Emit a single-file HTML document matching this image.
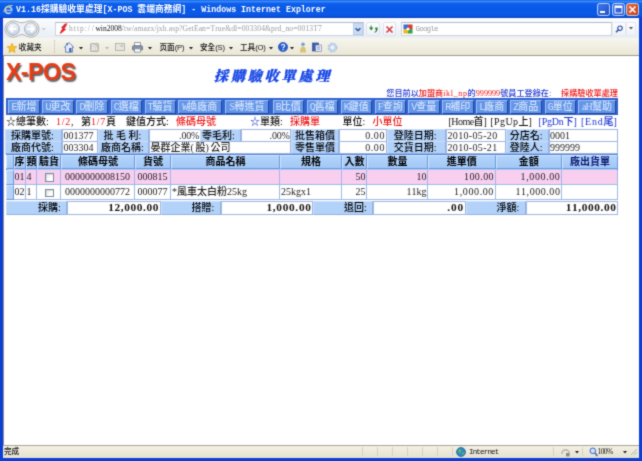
<!DOCTYPE html>
<html lang="zh-Hant"><head><meta charset="utf-8"><title>V1.16採購驗收單處理[X-POS 雲端商務網]</title>
<style>
html,body{margin:0;padding:0}
html{background:#0b3fd7}
body{width:642px;height:461px;overflow:hidden;position:relative;background:#fff;filter:url(#soft);
 font-family:"Liberation Serif","Noto Sans CJK TC",serif;font-size:10px;font-weight:500;color:#111;font-kerning:none;}
div,span,svg{position:absolute;box-sizing:border-box;white-space:pre}

.i{position:static}
.m{font-family:"Liberation Mono","Noto Sans CJK TC",monospace;letter-spacing:-0.1em}
.t{line-height:12px;height:12px}
.lab{background:#b3d2f9;border:1px solid #c9def9;border-right-color:#8fb2e6;border-bottom-color:#8fb2e6;height:13px;line-height:11px;text-align:center;color:#000}
.inp{background:#fff;border:1px solid #9fb6de;height:13px;line-height:11px;padding-left:.5px;color:#262626}
.r{text-align:right;padding-right:.4px;padding-left:0}
.btn{top:100px;height:14px;line-height:12px;background:#6395e8;border:1px solid #9fc2f4;border-right-color:#23469c;border-bottom-color:#23469c;color:#d2e3fb;text-align:center}
.th{top:154.6px;height:14.8px;line-height:12.6px;background:linear-gradient(#b2d4fb,#a3c8f6);border-left:1px solid #d6e6fb;border-top:1px solid #d6e6fb;border-right:1px solid #6c98dc;border-bottom:1px solid #6c98dc;text-align:center;font-weight:bold;color:#000}
.td{height:16px;line-height:14.6px;border-right:1px solid #9db8e6;border-bottom:1px solid #9db8e6;color:#222;padding-left:1px}
.p{background:#f9cff0}
.w{background:#fff}
.tot{font-size:11.3px;font-weight:bold;color:#111}
.red{color:#ee1616}
.blu{color:#1c34d0}
.tb{font-family:"Liberation Sans","Noto Sans CJK SC",sans-serif;font-size:7.6px;color:#111;line-height:10px;height:10px}
</style></head>
<body>
<svg width="0" height="0" style="left:0;top:0"><filter id="soft" x="0" y="0" width="100%" height="100%" color-interpolation-filters="sRGB"><feConvolveMatrix order="3" kernelMatrix="1 3 1 3 16 3 1 3 1" divisor="32" edgeMode="duplicate" preserveAlpha="true"/></filter></svg>
<div style="left:0px;top:0px;width:642px;height:461px;background:#0b3fd7"></div>
<div style="left:0px;top:0px;width:642px;height:18px;background:linear-gradient(#1766e6 0,#3888fa 1.5px,#0e5fec 3.5px,#0a57e5 9px,#0b5ae8 14px,#0a50dc 16.5px,#0a3db8 18px)"></div>
<svg style="left:3px;top:3.5px" width="11" height="11" viewBox="0 0 11 11"><circle cx="5.4" cy="6" r="3.3" fill="#1a56c8" stroke="#a9d0f8" stroke-width="1.7"/><path d="M2.6 6.2H8.4" stroke="#a9d0f8" stroke-width="1.2"/><path d="M8.6 6.4L8.8 8.4L6.6 8.6z" fill="#0a57e5"/><path d="M0.8 8.2C1.200 4 5 1 9.800 1.600" fill="none" stroke="#e6d25a" stroke-width="1"/></svg>
<div style="left:16px;top:3.5px;height:12px;line-height:12px;color:#fff;font-weight:bold;font-size:8.8px;font-family:'Liberation Mono','Noto Sans CJK TC',monospace"><span class="i" style="font-size:8.3px">V1.16</span>採購驗收單處理<span class="i" style="font-size:8.3px">[X-POS </span>雲端商務網<span class="i" style="font-size:8.3px">] - Windows Internet Explorer</span></div>
<svg style="left:597px;top:3.3px" width="13" height="13" viewBox="0 0 13 13"><defs><linearGradient id="g597" x1="0" y1="0" x2="1" y2="1"><stop offset="0" stop-color="#4078ee"/><stop offset="1" stop-color="#1f4fc6"/></linearGradient></defs><rect x="0.5" y="0.5" width="12" height="12" rx="2" fill="url(#g597)" stroke="#cfe0fb" stroke-width="0.9"/><rect x="3" y="8" width="5" height="2" fill="#fff"/></svg>
<svg style="left:611.5px;top:3.3px" width="13" height="13" viewBox="0 0 13 13"><defs><linearGradient id="g611" x1="0" y1="0" x2="1" y2="1"><stop offset="0" stop-color="#4078ee"/><stop offset="1" stop-color="#1f4fc6"/></linearGradient></defs><rect x="0.5" y="0.5" width="12" height="12" rx="2" fill="url(#g611)" stroke="#cfe0fb" stroke-width="0.9"/><rect x="3" y="3" width="7" height="7" fill="none" stroke="#fff" stroke-width="1"/><rect x="3" y="3" width="7" height="2" fill="#fff"/></svg>
<svg style="left:626px;top:3.3px" width="13" height="13" viewBox="0 0 13 13"><defs><linearGradient id="g626" x1="0" y1="0" x2="1" y2="1"><stop offset="0" stop-color="#ea6a3e"/><stop offset="1" stop-color="#c33d18"/></linearGradient></defs><rect x="0.5" y="0.5" width="12" height="12" rx="2" fill="url(#g626)" stroke="#cfe0fb" stroke-width="0.9"/><path d="M3.5 3.5L9.5 9.5M9.5 3.5L3.5 9.5" stroke="#fff" stroke-width="1.6"/></svg>
<div style="left:3px;top:18px;width:636px;height:19.5px;background:linear-gradient(#fafcfe,#e9eef6)"></div>
<div style="left:3px;top:37.5px;width:636px;height:17.5px;background:linear-gradient(#f7f6ee,#eae7d6)"></div>
<div style="left:3px;top:55px;width:636px;height:1px;background:#9c9a8c"></div>
<div style="left:3px;top:56px;width:636px;height:388.5px;background:#fff;border-left:1px solid #8f8f8f"></div>
<div style="left:3px;top:444.5px;width:636px;height:1px;background:#a8a595"></div>
<div style="left:3px;top:445.5px;width:636px;height:12px;background:linear-gradient(#f3f0e4,#e6e2d0)"></div>
<svg style="left:4px;top:19.7px" width="46" height="18" viewBox="0 0 46 18"><defs><linearGradient id="nb" x1="0" y1="0" x2="0" y2="1"><stop offset="0" stop-color="#f3f6fb"/><stop offset="1" stop-color="#c6d3e3"/></linearGradient></defs><path d="M9 0.800a8.200 8.200 0 1 0 0 16.400c3.500 0 5.500-2.600 8.900-2.600s5.400 2.600 8.900 2.600a8.200 8.200 0 1 0 0-16.400c-3.500 0-5.500 2-8.900 2s-5.400-2-8.900-2z" fill="#eff2f7" stroke="#b3b0a4" stroke-width="1"/><circle cx="9" cy="9" r="6.300" fill="url(#nb)" stroke="#98a6b8" stroke-width="0.9"/><circle cx="26.800" cy="9" r="6.300" fill="url(#nb)" stroke="#98a6b8" stroke-width="0.9"/><path d="M12.500 9H6.500M9 6L6 9L9 12" fill="none" stroke="#fff" stroke-width="2"/><path d="M23.300 9H29.300M26.800 6L29.800 9L26.800 12" fill="none" stroke="#fff" stroke-width="2"/><path d="M37.500 8.300h4.400l-2.200 2.200z" fill="#c2c8d0"/></svg>
<div style="left:55px;top:22px;width:309px;height:13.5px;background:#fff;border:1px solid #cdd3dc;border-top-color:#b4bbc6"></div>
<div style="left:352.8px;top:22.5px;width:10.7px;height:12.5px;background:#c9dcf6;border:1px solid #b9cfef"></div>
<svg style="left:354.2px;top:25.5px" width="8" height="7" viewBox="0 0 8 7"><path d="M1.6 2.2L4 4.6L6.4 2.2" fill="none" stroke="#283f86" stroke-width="1.3"/></svg>
<svg style="left:59px;top:23px" width="9" height="11" viewBox="0 0 9 11"><path d="M6 0.5L8.5 0.5L5.5 6L7.5 6L2 10.5L0.5 10.5L3.5 5L1.8 5z" fill="#e2262c"/></svg>
<div style="left:69px;top:23px;height:11px;line-height:11px;font-size:7.55px;color:#9c9c9c"><span class="i" style="letter-spacing:0.133em">http:</span><span class="i" style="letter-spacing:0.222em">//</span><span class="i" style="color:#111">win2008</span><span class="i" style="letter-spacing:0.017em">/tw/amazx/jxh.asp?GetEan=True&amp;dl=003304&amp;prd_no=0013T7</span></div>
<div style="left:366px;top:22px;width:14px;height:13.5px;background:linear-gradient(#fdfefe,#eef2f8);border:1px solid #dde3ec;border-radius:2px"></div>
<svg style="left:367.5px;top:23.5px" width="11" height="11" viewBox="0 0 11 11"><path d="M3.6 1.4v2.2H5.4L3.2 6.4 1 3.6H2.6V1.4z" fill="#2a7d30"/><path d="M7.2 3.6h2.4c.4 2.6-.6 4.4-2.8 5.2l-.4-.9c1.2-.6 1.7-1.500 1.6-2.500H7.200z" fill="#2a7d30"/></svg>
<div style="left:382.5px;top:22px;width:13.5px;height:13.5px;background:linear-gradient(#fdfefe,#eef2f8);border:1px solid #dde3ec;border-radius:2px"></div>
<svg style="left:385px;top:24.5px" width="9" height="9" viewBox="0 0 9 9"><path d="M1.5 1.5L7.5 7.5M7.5 1.5L1.5 7.5" stroke="#d8323a" stroke-width="1.5"/></svg>
<div style="left:401px;top:22px;width:211px;height:13.5px;background:#fff;border:1px solid #cdd3dc;border-top-color:#b4bbc6"></div>
<svg style="left:403px;top:23.5px" width="10" height="10" viewBox="0 0 10 10"><rect x="0" y="0" width="10" height="10" rx="1.5" fill="#f4f4f4"/><rect x="0.5" y="0.5" width="4.5" height="4.5" fill="#3a6be0"/><rect x="5" y="0.5" width="4.5" height="4.5" fill="#e03a2a"/><rect x="0.5" y="5" width="4.5" height="4.5" fill="#e8b820"/><rect x="5" y="5" width="4.5" height="4.5" fill="#3aa048"/><circle cx="5" cy="5" r="1.6" fill="#fff"/></svg>
<div style="left:415.5px;top:23.5px;height:11px;line-height:11px;font-size:7.5px;color:#a0a0a0;font-family:'Liberation Mono',monospace;letter-spacing:-0.8px">Google</div>
<div style="left:612px;top:22px;width:13.5px;height:13.5px;background:linear-gradient(#fbfcfe,#eef2f8);border:1px solid #e6eaf1"></div>
<svg style="left:614px;top:24px" width="10" height="10" viewBox="0 0 10 10"><circle cx="6" cy="4.2" r="2.2" fill="#fff" stroke="#2b4fa5" stroke-width="1.2"/><path d="M4.300 6L2 8.300" stroke="#2b4fa5" stroke-width="1.5"/></svg>
<div style="left:625.5px;top:22px;width:10.5px;height:13.5px;background:linear-gradient(#fbfcfe,#eef2f8);border:1px solid #e6eaf1"></div>
<svg style="left:629px;top:27.3px" width="4" height="3" viewBox="0 0 4 3"><path d="M0 0h4L2 2.6z" fill="#555"/></svg>
<svg style="left:6.6px;top:42.8px" width="10" height="10" viewBox="0 0 10 10"><path d="M5 0.3L6.4 3.4 9.8 3.8 7.3 6.1 8 9.5 5 7.8 2 9.5 2.7 6.1 0.2 3.8 3.6 3.4z" fill="#f6c228" stroke="#d99a10" stroke-width="0.6"/></svg>
<div class="tb" style="left:18.8px;top:42.6px">收藏夹</div>
<div style="left:54px;top:40px;width:1px;height:13px;background:repeating-linear-gradient(#b9b7a8 0,#b9b7a8 1px,transparent 1px,transparent 2px)"></div>
<svg style="left:64px;top:41.5px" width="10" height="11" viewBox="0 0 10 11"><path d="M5 0.5L9.6 5H8.4V10.2H1.6V5H0.4z" fill="#e9eef8" stroke="#4a68a8" stroke-width="0.8"/><rect x="5.2" y="6" width="2.2" height="4" fill="#3a5fb0"/><rect x="2.4" y="1" width="1.4" height="2.4" fill="#3a5fb0"/></svg>
<svg style="left:79px;top:46.5px" width="4" height="3" viewBox="0 0 4 3"><path d="M0 0h4L2 2.6z" fill="#222"/></svg>
<svg style="left:90px;top:42.5px" width="9" height="9" viewBox="0 0 9 9"><rect x="0.4" y="0.4" width="8.2" height="8.2" rx="1.5" fill="#c9c9c4" stroke="#a9a9a2" stroke-width="0.8"/><circle cx="2.6" cy="6.4" r="0.9" fill="#fff"/><path d="M1.8 4a3.2 3.2 0 0 1 3.2 3.2M1.8 2a5.2 5.2 0 0 1 5.2 5.2" fill="none" stroke="#fff" stroke-width="0.9"/></svg>
<svg style="left:104.5px;top:46.5px" width="4" height="3" viewBox="0 0 4 3"><path d="M0 0h4L2 2.6z" fill="#b5b5ad"/></svg>
<svg style="left:115px;top:43px" width="10" height="8" viewBox="0 0 10 8"><rect x="0.5" y="0.5" width="9" height="7" fill="#e6e6e0" stroke="#b2b2aa" stroke-width="0.9"/><rect x="5.5" y="1.8" width="2.6" height="2.2" fill="#c4c4bc"/></svg>
<svg style="left:132px;top:41.5px" width="11" height="11" viewBox="0 0 11 11"><rect x="2.6" y="0.6" width="5.8" height="3.6" fill="#fff" stroke="#7d8694" stroke-width="0.8"/><rect x="0.5" y="3.8" width="10" height="4.4" rx="1" fill="#8a95a8" stroke="#5f6878" stroke-width="0.8"/><rect x="2.4" y="6.8" width="6.2" height="3.4" fill="#f2f4f8" stroke="#7d8694" stroke-width="0.7"/></svg>
<svg style="left:148px;top:46.5px" width="4" height="3" viewBox="0 0 4 3"><path d="M0 0h4L2 2.6z" fill="#222"/></svg>
<div class="tb" style="left:159.5px;top:42.6px">页面<span class="i" style="letter-spacing:-0.2px">(P)</span></div>
<svg style="left:188.5px;top:46.5px" width="4" height="3" viewBox="0 0 4 3"><path d="M0 0h4L2 2.6z" fill="#222"/></svg>
<div class="tb" style="left:200px;top:42.6px">安全<span class="i" style="letter-spacing:-0.2px">(S)</span></div>
<svg style="left:228.5px;top:46.5px" width="4" height="3" viewBox="0 0 4 3"><path d="M0 0h4L2 2.6z" fill="#222"/></svg>
<div class="tb" style="left:240px;top:42.6px">工具<span class="i" style="letter-spacing:-0.2px">(O)</span></div>
<svg style="left:268.5px;top:46.5px" width="4" height="3" viewBox="0 0 4 3"><path d="M0 0h4L2 2.6z" fill="#222"/></svg>
<svg style="left:277.5px;top:42px" width="10" height="10" viewBox="0 0 10 10"><circle cx="5" cy="5" r="4.6" fill="#2a5fd0" stroke="#1b3f9a" stroke-width="0.6"/><path d="M3.6 3.8c0-2 3-2 3 0 0 1.2-1.5 1.2-1.5 2.4" fill="none" stroke="#fff" stroke-width="1.1"/><circle cx="5.1" cy="7.7" r="0.7" fill="#fff"/></svg>
<svg style="left:289.5px;top:46.5px" width="4" height="3" viewBox="0 0 4 3"><path d="M0 0h4L2 2.6z" fill="#222"/></svg>
<svg style="left:298.5px;top:41.5px" width="8" height="11" viewBox="0 0 8 11"><circle cx="4" cy="2.2" r="1.8" fill="#6fa0d8"/><path d="M1 10.5c0-5 1.5-6 3-6s3 1 3 6z" fill="#d9c37a"/></svg>
<svg style="left:311.5px;top:42px" width="10" height="10" viewBox="0 0 10 10"><rect x="0.5" y="1" width="6" height="8" fill="#3a5fb8" stroke="#24407e" stroke-width="0.6"/><rect x="3.5" y="3" width="6" height="6.5" fill="#e9eef8" stroke="#6a7ca8" stroke-width="0.6"/><rect x="4.8" y="4.6" width="3.2" height="1" fill="#8a9ac0"/><rect x="4.8" y="6.6" width="3.2" height="1" fill="#8a9ac0"/></svg>
<svg style="left:327px;top:41.5px" width="11" height="11" viewBox="0 0 11 11"><circle cx="5.5" cy="5.5" r="3.6" fill="none" stroke="#a9c3e6" stroke-width="2.6" stroke-dasharray="2 0.9"/><circle cx="5.5" cy="5.5" r="3.2" fill="none" stroke="#bcd2ee" stroke-width="1.6"/><circle cx="5.5" cy="5.5" r="1.5" fill="#f2f6fb"/></svg>
<div class="tb" style="left:4px;top:447.2px">完成</div>
<div style="left:362px;top:447px;width:1px;height:9px;background:#d6d2c0"></div>
<div style="left:377px;top:447px;width:1px;height:9px;background:#d6d2c0"></div>
<div style="left:392px;top:447px;width:1px;height:9px;background:#d6d2c0"></div>
<div style="left:407px;top:447px;width:1px;height:9px;background:#d6d2c0"></div>
<div style="left:422px;top:447px;width:1px;height:9px;background:#d6d2c0"></div>
<div style="left:437px;top:447px;width:1px;height:9px;background:#d6d2c0"></div>
<div style="left:452px;top:447px;width:1px;height:9px;background:#d6d2c0"></div>
<div style="left:553px;top:447px;width:1px;height:9px;background:#d6d2c0"></div>
<div style="left:582px;top:447px;width:1px;height:9px;background:#d6d2c0"></div>
<svg style="left:456px;top:446.5px" width="10" height="10" viewBox="0 0 10 10"><circle cx="5" cy="5" r="4.5" fill="#2f86c8" stroke="#1d5c92" stroke-width="0.7"/><path d="M2 3.2c1.2-1.6 3-1.2 3.4 0 .4 1.2-1 1.6-.6 3-.9.4-2.4-.6-2.8-3z" fill="#58b868"/><path d="M6.4 5.4c1-.4 2 .2 1.8 1.4-.4 1-1.4 1.4-2 1.2z" fill="#58b868"/></svg>
<div style="left:469px;top:447px;height:10px;line-height:10px;font-size:7.5px;color:#111;font-family:'Liberation Mono',monospace;letter-spacing:-0.82px">Internet</div>
<svg style="left:561px;top:446.5px" width="10" height="10" viewBox="0 0 10 10"><path d="M1 7a3.6 3.6 0 0 1 7.2-1" fill="none" stroke="#b9b9b0" stroke-width="1.6"/><rect x="5" y="6" width="3.6" height="3.4" fill="#8a8a84"/></svg>
<svg style="left:574.5px;top:450.5px" width="4" height="3" viewBox="0 0 4 3"><path d="M0 0h4L2 2.6z" fill="#222"/></svg>
<svg style="left:588.5px;top:446.5px" width="9" height="10" viewBox="0 0 9 10"><circle cx="3.8" cy="3.8" r="2.8" fill="#cfe2f8" stroke="#3a66c0" stroke-width="1"/><path d="M6 6L8.4 9" stroke="#3a66c0" stroke-width="1.5"/></svg>
<div style="left:597.5px;top:447px;height:10px;line-height:10px;font-size:7.5px;color:#111;"><span class="i" style="letter-spacing:-0.083em">100%</span></div>
<svg style="left:622.5px;top:450.5px" width="4" height="3" viewBox="0 0 4 3"><path d="M0 0h4L2 2.6z" fill="#222"/></svg>
<svg style="left:630px;top:448px" width="8" height="8" viewBox="0 0 8 8"><path d="M7 1L1 7M7 4L4 7" stroke="#b8b4a0" stroke-width="1"/></svg>
<div style="left:5.9px;top:58.3px;height:28px;line-height:28px;font-family:'Liberation Sans',sans-serif;font-weight:bold;font-size:23.2px;letter-spacing:-0.5px;color:#e93b14;text-shadow:1.3px 1.5px 1.4px #5c5c5c">X-POS</div>
<div style="left:214px;top:66px;height:22px;line-height:22px;font-family:'Liberation Serif','Noto Serif CJK SC',serif;font-weight:900;font-style:italic;font-size:14px;letter-spacing:2.9px;color:#1444e6;-webkit-text-stroke:.3px #1444e6">採購驗收單處理</div>
<div style="right:24px;top:87.7px;height:12px;line-height:12px;font-size:8.15px;font-weight:500" class="blu">您目前以<span class="i red">加盟商<span class="i" style="letter-spacing:0.074em">ikl_np</span></span>的<span class="i red">999999</span>號員工登錄在<span class="i" style="letter-spacing:0.241em">:  </span><span class="i red">採購驗收單處理</span></div>
<div style="left:6px;top:98.3px;width:612px;height:16.7px;background:#3163d0"></div>
<div class="btn" style="left:8px;width:32px"><span class="i m">E</span>新增</div>
<div class="btn" style="left:42px;width:32px"><span class="i m">U</span>更改</div>
<div class="btn" style="left:76px;width:32px"><span class="i m">D</span>刪除</div>
<div class="btn" style="left:110.5px;width:31.5px"><span class="i m">C</span>選檔</div>
<div class="btn" style="left:144.5px;width:31px"><span class="i m">T</span>驗貨</div>
<div class="btn" style="left:178px;width:43.5px"><span class="i m">W</span>換廠商</div>
<div class="btn" style="left:225px;width:44px"><span class="i" style="letter-spacing:-0.056em">S</span>轉進貨</div>
<div class="btn" style="left:272.5px;width:31.5px"><span class="i m">B</span>比價</div>
<div class="btn" style="left:306.5px;width:31.5px"><span class="i m">Q</span>舊檔</div>
<div class="btn" style="left:340.5px;width:31.5px"><span class="i m">K</span>鍵值</div>
<div class="btn" style="left:374.5px;width:31.5px"><span class="i" style="letter-spacing:-0.056em">F</span>查詢</div>
<div class="btn" style="left:408px;width:31.5px"><span class="i m">V</span>查量</div>
<div class="btn" style="left:442px;width:31.5px"><span class="i m">R</span>補印</div>
<div class="btn" style="left:476px;width:31.5px"><span class="i m">L</span>廠商</div>
<div class="btn" style="left:510px;width:31.5px"><span class="i m">Z</span>商品</div>
<div class="btn" style="left:544.5px;width:31.5px"><span class="i m">G</span>單位</div>
<div class="btn" style="left:578px;width:38px"><span class="i" style="letter-spacing:-0.083em">aH</span>幫助</div>
<div class="t" style="left:6px;top:116px;">☆總筆數<span class="i" style="letter-spacing:0.236em">: </span><span class="i red"><span class="i" style="letter-spacing:0.074em">1/2</span></span><span class="i" style="letter-spacing:0.250em">, </span>第<span class="i red"><span class="i" style="letter-spacing:0.074em">1/7</span></span>頁<span class="i" style="letter-spacing:0.250em">  </span>鍵值方式<span class="i" style="letter-spacing:0.236em">: </span><span class="i red">條碼母號</span></div>
<div class="t" style="left:250px;top:116px;"><span class="i blu">☆</span>單類<span class="i" style="letter-spacing:0.236em">: </span><span class="i red">採購單</span></div>
<div class="t" style="left:342.5px;top:116px;">單位<span class="i" style="letter-spacing:0.236em">: </span><span class="i red">小單位</span></div>
<div class="t" style="left:448.5px;top:116px;"><span class="i" style="letter-spacing:-0.055em">[Home</span>首<span class="i" style="letter-spacing:0.044em">] [PgUp</span>上<span class="i" style="letter-spacing:0.208em">] </span><span class="i blu"><span class="i" style="letter-spacing:-0.022em">[PgDn</span>下<span class="i" style="letter-spacing:0.079em">] [End</span>尾<span class="i" style="letter-spacing:0.167em">]</span></span></div>
<div style="left:5px;top:128.5px;width:613px;height:25.5px;background:#b3d2f9"></div>
<div class="lab" style="left:5px;top:128.7px;width:57px;">採購單號<span class="i" style="letter-spacing:0.222em">:</span></div>
<div class="inp" style="left:62px;top:128.7px;width:36px">001377</div>
<div class="lab" style="left:98px;top:128.7px;width:51px;word-spacing:0px">批 毛 利<span class="i" style="letter-spacing:0.222em">:</span></div>
<div class="inp r" style="left:149px;top:128.7px;width:51.5px"><span class="i" style="letter-spacing:-0.021em">.00%</span></div>
<div class="lab" style="left:200px;top:128.7px;width:41px;text-align:left;padding-left:1px">零毛利<span class="i" style="letter-spacing:0.222em">:</span></div>
<div class="inp r" style="left:241px;top:128.7px;width:50px"><span class="i" style="letter-spacing:-0.021em">.00%</span></div>
<div class="lab" style="left:291px;top:128.7px;width:48px;">批售箱價</div>
<div class="inp r" style="left:339px;top:128.7px;width:47.5px"><span class="i" style="letter-spacing:0.062em">0.00</span></div>
<div class="lab" style="left:386.5px;top:128.7px;width:59.5px;">登陸日期<span class="i" style="letter-spacing:0.222em">:</span></div>
<div class="inp" style="left:446px;top:128.7px;width:60px"><span class="i" style="letter-spacing:0.033em">2010-05-20</span></div>
<div class="lab" style="left:506px;top:128.7px;width:42.5px;">分店名<span class="i" style="letter-spacing:0.222em">:</span></div>
<div class="inp" style="left:548.5px;top:128.7px;width:69.5px">0001</div>
<div class="lab" style="left:5px;top:141.2px;width:57px;">廠商代號<span class="i" style="letter-spacing:0.222em">:</span></div>
<div class="inp" style="left:62px;top:141.2px;width:36px">003304</div>
<div class="lab" style="left:98px;top:141.2px;width:51px;">廠商名稱<span class="i" style="letter-spacing:0.222em">:</span></div>
<div class="inp" style="left:149px;top:141.2px;width:142px">晏群企業<span class="i" style="letter-spacing:0.167em">(</span>股<span class="i" style="letter-spacing:0.167em">)</span>公司</div>
<div class="lab" style="left:291px;top:141.2px;width:48px;">零售單價</div>
<div class="inp r" style="left:339px;top:141.2px;width:47.5px"><span class="i" style="letter-spacing:0.062em">0.00</span></div>
<div class="lab" style="left:386.5px;top:141.2px;width:59.5px;">交貨日期<span class="i" style="letter-spacing:0.222em">:</span></div>
<div class="inp" style="left:446px;top:141.2px;width:60px"><span class="i" style="letter-spacing:0.033em">2010-05-21</span></div>
<div class="lab" style="left:506px;top:141.2px;width:42.5px;">登陸人<span class="i" style="letter-spacing:0.222em">:</span></div>
<div class="inp" style="left:548.5px;top:141.2px;width:69.5px">999999</div>
<div style="left:6px;top:154.3px;width:612px;height:45.8px;background:#a8cbf6;border:1px solid #5585e0"></div>
<div class="th" style="left:6px;width:7.5px;"></div>
<div class="th" style="left:13.5px;width:12px;">序</div>
<div class="th" style="left:25.5px;width:11.5px;">類</div>
<div class="th" style="left:37px;width:24px;">驗貨</div>
<div class="th" style="left:61px;width:74px;">條碼母號</div>
<div class="th" style="left:135px;width:36px;">貨號</div>
<div class="th" style="left:171px;width:109px;">商品名稱</div>
<div class="th" style="left:280px;width:62px;">規格</div>
<div class="th" style="left:342px;width:25px;">入數</div>
<div class="th" style="left:367px;width:61px;">數量</div>
<div class="th" style="left:428px;width:67.5px;">進單價</div>
<div class="th" style="left:495.5px;width:66.5px;">金額</div>
<div class="th" style="left:562px;width:56px;color:#0c1670;">廠出貨單</div>
<div style="left:6px;top:169.5px;width:7.5px;height:15.2px;background:#b3d2f9;border:1px solid #d6e6fb;border-right-color:#6c98dc;border-bottom-color:#6c98dc"></div>
<div class="td p" style="left:13.5px;top:169.5px;width:12px;height:15.7px;">01</div>
<div class="td p" style="left:25.5px;top:169.5px;width:11.5px;height:15.7px;">4</div>
<div class="td p" style="left:37px;top:169.5px;width:24px;height:15.7px;"><span style="left:8.1px;top:3.6px;width:8.8px;height:8.6px;background:linear-gradient(135deg,#e4e8e2,#fff 70%);border:1px solid #7c8a9c;box-shadow:inset 0.6px 0.6px 0 #c8ccd2"></span></div>
<div class="td p" style="left:61px;top:169.5px;width:74px;height:15.7px;text-align:center;padding:0;">0000000008150</div>
<div class="td p" style="left:135px;top:169.5px;width:36px;height:15.7px;text-align:center;padding:0;">000815</div>
<div class="td p" style="left:171px;top:169.5px;width:109px;height:15.7px;"></div>
<div class="td p" style="left:280px;top:169.5px;width:62px;height:15.7px;"></div>
<div class="td p" style="left:342px;top:169.5px;width:25px;height:15.7px;text-align:right;padding-right:.5px;padding-left:0;">50</div>
<div class="td p" style="left:367px;top:169.5px;width:61px;height:15.7px;text-align:right;padding-right:.5px;padding-left:0;">10</div>
<div class="td p" style="left:428px;top:169.5px;width:67.5px;height:15.7px;text-align:right;padding-right:.5px;padding-left:0;"><span class="i" style="letter-spacing:0.042em">100.00</span></div>
<div class="td p" style="left:495.5px;top:169.5px;width:66.5px;height:15.7px;text-align:right;padding-right:.5px;padding-left:0;"><span class="i" style="letter-spacing:0.062em">1,000.00</span></div>
<div class="td p" style="left:562px;top:169.5px;width:56px;height:15.7px;"></div>
<div style="left:6px;top:185.2px;width:7.5px;height:15.2px;background:#b3d2f9;border:1px solid #d6e6fb;border-right-color:#6c98dc;border-bottom-color:#6c98dc"></div>
<div class="td w" style="left:13.5px;top:185.2px;width:12px;height:14.6px;">02</div>
<div class="td w" style="left:25.5px;top:185.2px;width:11.5px;height:14.6px;">1</div>
<div class="td w" style="left:37px;top:185.2px;width:24px;height:14.6px;"><span style="left:8.1px;top:3.6px;width:8.8px;height:8.6px;background:linear-gradient(135deg,#e4e8e2,#fff 70%);border:1px solid #7c8a9c;box-shadow:inset 0.6px 0.6px 0 #c8ccd2"></span></div>
<div class="td w" style="left:61px;top:185.2px;width:74px;height:14.6px;text-align:center;padding:0;">0000000000772</div>
<div class="td w" style="left:135px;top:185.2px;width:36px;height:14.6px;text-align:center;padding:0;">000077</div>
<div class="td w" style="left:171px;top:185.2px;width:109px;height:14.6px;">*風車太白粉25kg</div>
<div class="td w" style="left:280px;top:185.2px;width:62px;height:14.6px;">25kgx1</div>
<div class="td w" style="left:342px;top:185.2px;width:25px;height:14.6px;text-align:right;padding-right:.5px;padding-left:0;">25</div>
<div class="td w" style="left:367px;top:185.2px;width:61px;height:14.6px;text-align:right;padding-right:.5px;padding-left:0;">11kg</div>
<div class="td w" style="left:428px;top:185.2px;width:67.5px;height:14.6px;text-align:right;padding-right:.5px;padding-left:0;"><span class="i" style="letter-spacing:0.062em">1,000.00</span></div>
<div class="td w" style="left:495.5px;top:185.2px;width:66.5px;height:14.6px;text-align:right;padding-right:.5px;padding-left:0;"><span class="i" style="letter-spacing:0.056em">11,000.00</span></div>
<div class="td w" style="left:562px;top:185.2px;width:56px;height:14.6px;"></div>
<div style="left:6px;top:201px;width:612px;height:14px;background:#b3d2f9"></div>
<div class="lab" style="left:6px;top:201px;width:61px;height:14px;line-height:12px;text-align:right;padding-right:3px">採購<span class="i" style="letter-spacing:0.222em">:</span></div>
<div class="inp r tot" style="left:67px;top:201px;width:93.5px;height:14px;line-height:11.2px"><span class="i" style="letter-spacing:0.056em">12,000.00</span></div>
<div class="lab" style="left:160.5px;top:201px;width:60px;height:14px;line-height:12px;text-align:right;padding-right:3px">搭贈<span class="i" style="letter-spacing:0.222em">:</span></div>
<div class="inp r tot" style="left:220.5px;top:201px;width:92.5px;height:14px;line-height:11.2px"><span class="i" style="letter-spacing:0.062em">1,000.00</span></div>
<div class="lab" style="left:313px;top:201px;width:60px;height:14px;line-height:12px;text-align:right;padding-right:3px">退回<span class="i" style="letter-spacing:0.222em">:</span></div>
<div class="inp r tot" style="left:373px;top:201px;width:92.5px;height:14px;line-height:11.2px"><span class="i" style="letter-spacing:0.083em">.00</span></div>
<div class="lab" style="left:465.5px;top:201px;width:60px;height:14px;line-height:12px;text-align:right;padding-right:3px">淨額<span class="i" style="letter-spacing:0.222em">:</span></div>
<div class="inp r tot" style="left:525.5px;top:201px;width:92.5px;height:14px;line-height:11.2px"><span class="i" style="letter-spacing:0.056em">11,000.00</span></div>
</body></html>
